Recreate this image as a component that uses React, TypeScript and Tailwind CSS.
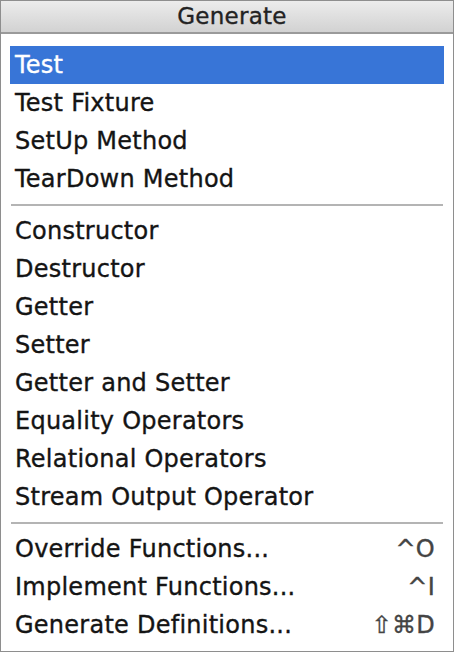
import React from 'react';

type Item = { label: string; shortcut?: string; selected?: boolean };

const groups: Item[][] = [
  [
    { label: 'Test', selected: true },
    { label: 'Test Fixture' },
    { label: 'SetUp Method' },
    { label: 'TearDown Method' },
  ],
  [
    { label: 'Constructor' },
    { label: 'Destructor' },
    { label: 'Getter' },
    { label: 'Setter' },
    { label: 'Getter and Setter' },
    { label: 'Equality Operators' },
    { label: 'Relational Operators' },
    { label: 'Stream Output Operator' },
  ],
  [
    { label: 'Override Functions...', shortcut: '^O' },
    { label: 'Implement Functions...', shortcut: '^I' },
    { label: 'Generate Definitions...', shortcut: '⇧⌘D' },
  ],
];

const MenuRow: React.FC<{ item: Item }> = ({ item }) => (
  <div
    className={
      item.selected
        ? 'h-[38px] flex items-center justify-between pl-[5px] pr-[9px] bg-[#3875d7] text-white'
        : 'h-[38px] flex items-center justify-between pl-[5px] pr-[9px] text-[#141414]'
    }
  >
    <span>{item.label}</span>
    {item.shortcut && <span className="text-[#444]">{item.shortcut}</span>}
  </div>
);

export default function App() {
  return (
    <div
      className="w-[454px] h-[652px] bg-white border border-[#8e8e8e] flex flex-col text-[24px] leading-none tracking-[0.25px] [-webkit-text-stroke:0.35px]"
      style={{ fontFamily: '"DejaVu Sans", "Noto Sans", sans-serif' }}
    >
      <div className="h-[33px] shrink-0 flex items-center justify-center pl-[10px] bg-gradient-to-b from-[#ececec] to-[#d2d2d2] border-b-2 border-[#9a9a9a] text-[#222] text-[23px]">
        Generate
      </div>
      <div className="flex flex-col px-[9px] pt-[12px]">
        {groups.map((group, gi) => (
          <React.Fragment key={gi}>
            {gi > 0 && (
              <div className="h-[14px] flex items-center pl-[1px] pr-[1px]">
                <div className="w-full h-[2px] bg-[#b4b4b4]" />
              </div>
            )}
            {group.map((item) => (
              <MenuRow key={item.label} item={item} />
            ))}
          </React.Fragment>
        ))}
      </div>
    </div>
  );
}
